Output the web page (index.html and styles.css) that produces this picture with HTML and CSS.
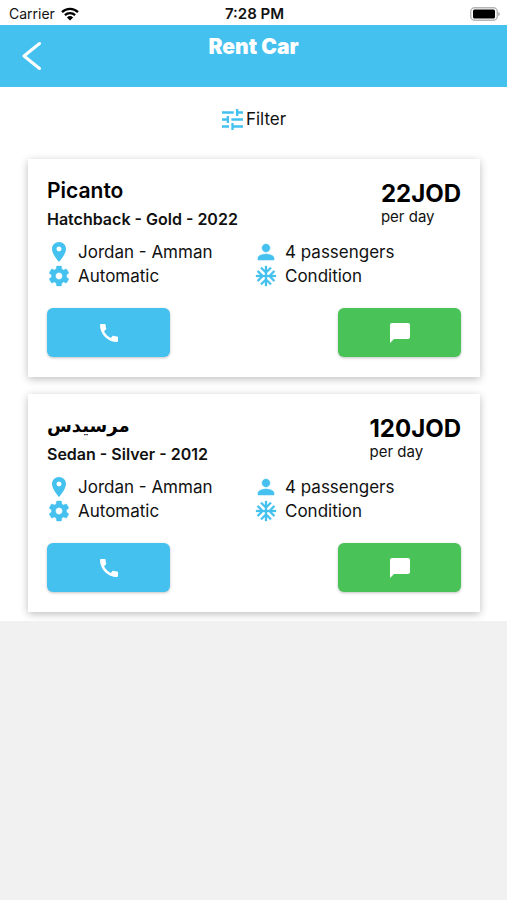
FILE: index.html
```html
<!DOCTYPE html>
<html lang="en">
<head>
<meta charset="utf-8">
<meta name="viewport" content="width=device-width, initial-scale=1">
<title>Rent Car</title>
<link rel="stylesheet" href="styles.css">
</head>
<body>
<svg class="sprite" aria-hidden="true">
  <symbol id="pin" viewBox="0 0 24 24"><path d="M12 2C8.13 2 5 5.13 5 9c0 5.25 7 13 7 13s7-7.75 7-13c0-3.87-3.13-7-7-7zm0 9.500a2.500 2.500 0 0 1 0-5 2.500 2.500 0 0 1 0 5z"/></symbol>
  <symbol id="gear" viewBox="0 0 24 24"><path d="M19.430 12.980c.04-.32.07-.64.07-.98s-.03-.66-.07-.98l2.110-1.650c.19-.15.24-.42.12-.64l-2-3.460c-.12-.22-.39-.3-.61-.22l-2.490 1c-.52-.4-1.080-.73-1.690-.98l-.38-2.650C14.460 2.180 14.250 2 14 2h-4c-.25 0-.46.18-.49.42l-.38 2.650c-.61.25-1.170.59-1.690.98l-2.490-1c-.23-.09-.49 0-.61.22l-2 3.460c-.13.22-.07.49.12.64l2.110 1.650c-.04.32-.07.65-.07.98s.03.66.07.98l-2.110 1.650c-.19.15-.24.42-.12.64l2 3.460c.12.22.39.3.61.22l2.490-1c.52.4 1.080.73 1.690.98l.38 2.650c.03.24.24.42.49.42h4c.25 0 .46-.18.49-.42l.38-2.650c.61-.25 1.170-.59 1.690-.98l2.490 1c.23.09.49 0 .61-.22l2-3.460c.12-.22.07-.49-.12-.64l-2.110-1.650zM12 15.500c-1.930 0-3.500-1.570-3.500-3.500s1.570-3.500 3.500-3.500 3.500 1.570 3.500 3.500-1.570 3.500-3.500 3.500z" stroke="#44c1ef" stroke-width=".4"/></symbol>
  <symbol id="person" viewBox="0 0 24 24"><path d="M12 12c2.210 0 4-1.790 4-4s-1.790-4-4-4-4 1.790-4 4 1.790 4 4 4zm0 2c-2.670 0-8 1.340-8 4v2h16v-2c0-2.660-5.330-4-8-4z" stroke="#44c1ef" stroke-width=".5"/></symbol>
  <symbol id="snow" viewBox="0 0 24 24"><path d="M22 11h-4.170l3.240-3.240-1.410-1.420L15 11h-2V9l4.660-4.660-1.420-1.410L13 6.170V2h-2v4.170L7.760 2.930 6.340 4.340 11 9v2H9L4.340 6.340 2.930 7.760 6.170 11H2v2h4.170l-3.240 3.240 1.410 1.420L9 13h2v2l-4.660 4.660 1.420 1.410L11 17.830V22h2v-4.170l3.240 3.240 1.420-1.410L13 15v-2h2l4.660 4.660 1.410-1.420L17.830 13H22z" stroke="#44c1ef" stroke-width=".3"/></symbol>
  <symbol id="phone" viewBox="0 0 24 24"><path d="M20.010 15.380c-1.230 0-2.420-.2-3.530-.56-.35-.12-.74-.03-1.010.24l-1.570 1.970c-2.830-1.350-5.480-3.900-6.890-6.830l1.950-1.660c.27-.28.35-.67.24-1.020-.37-1.110-.56-2.300-.56-3.530 0-.54-.45-.99-.99-.99H4.190C3.650 3 3 3.240 3 3.990 3 13.280 10.730 21 20.010 21c.71 0 .99-.63.99-1.180v-3.450c0-.54-.45-.99-.99-.99z"/></symbol>
  <symbol id="chat" viewBox="0 0 24 24"><path d="M20 2H4c-1.100 0-2 .9-2 2v18l4-4h14c1.100 0 2-.9 2-2V4c0-1.100-.9-2-2-2z"/></symbol>
</svg>

<div class="screen">
  <div class="status">
    <div class="carrier">Carrier
      <svg class="wifi" viewBox="0 0 18 14" aria-hidden="true"><path d="M1 5.200a11.500 11.500 0 0 1 16 0M3.900 8.100a7.400 7.400 0 0 1 10.200 0" fill="none" stroke="#000" stroke-width="2.300"/><path d="M9 13.600 5.900 10.400a4.500 4.500 0 0 1 6.200 0z"/></svg>
    </div>
    <div class="clock">7:28 PM</div>
    <svg class="battery" viewBox="0 0 30 14" aria-hidden="true"><rect x=".7" y=".7" width="26.600" height="12.600" rx="4" fill="#fff" stroke="#b5b5b5" stroke-width="1.400"/><rect x="3" y="2.500" width="22" height="9" rx="1.500"/><path d="M28.300 5v4q1.500-.7 1.500-2t-1.500-2z" fill="#a5a5a5"/></svg>
  </div>

  <header class="header">
    <button class="back" type="button" aria-label="Back"><svg viewBox="0 0 20 28" aria-hidden="true"><path d="M17.500 1.500 2 14l15.500 12.500" fill="none" stroke="#fff" stroke-width="3" stroke-linecap="round" stroke-linejoin="round"/></svg></button>
    <h1>Rent Car</h1>
  </header>

  <main>
    <button class="filter" type="button"><svg viewBox="3 3 18 18" aria-hidden="true"><path d="M3 17v2h6v-2H3zM3 5v2h10V5H3zm10 16v-2h8v-2h-8v-2h-2v6h2zM7 9v2H3v2h4v2h2V9H7zm14 4v-2H11v2h10zm-6-4h2V7h4V5h-4V3h-2v6z"/></svg>Filter</button>

    <article class="card">
      <div class="top">
        <div><h2>Picanto</h2><p class="model">Hatchback - Gold - 2022</p></div>
        <div><p class="price">22JOD</p><p class="unit">per day</p></div>
      </div>
      <ul class="features">
        <li><svg><use href="#pin"/></svg>Jordan - Amman</li>
        <li><svg><use href="#person"/></svg>4 passengers</li>
        <li><svg><use href="#gear"/></svg>Automatic</li>
        <li><svg><use href="#snow"/></svg>Condition</li>
      </ul>
      <div class="actions">
        <button class="call" type="button" aria-label="Call"><svg><use href="#phone"/></svg></button>
        <button class="message" type="button" aria-label="Message"><svg><use href="#chat"/></svg></button>
      </div>
    </article>

    <article class="card">
      <div class="top">
        <div><h2 lang="ar">مرسيدس</h2><p class="model">Sedan - Silver - 2012</p></div>
        <div><p class="price">120JOD</p><p class="unit">per day</p></div>
      </div>
      <ul class="features">
        <li><svg><use href="#pin"/></svg>Jordan - Amman</li>
        <li><svg><use href="#person"/></svg>4 passengers</li>
        <li><svg><use href="#gear"/></svg>Automatic</li>
        <li><svg><use href="#snow"/></svg>Condition</li>
      </ul>
      <div class="actions">
        <button class="call" type="button" aria-label="Call"><svg><use href="#phone"/></svg></button>
        <button class="message" type="button" aria-label="Message"><svg><use href="#chat"/></svg></button>
      </div>
    </article>
  </main>
</div>
</body>
</html>
```
FILE: styles.css
```css
* {
  box-sizing: border-box;
}

body {
  margin: 0;
  background: #f1f1f1;
  color: #111;
  font-family: Inter, "DejaVu Sans", sans-serif;
}

h1, h2, p, ul {
  margin: 0;
  padding: 0;
}

button {
  border: 0;
  padding: 0;
  background: none;
  color: inherit;
  font: inherit;
  cursor: pointer;
}

.sprite {
  display: none;
}

.screen {
  background: #fff;
}

.status {
  display: grid;
  grid-template-columns: 1fr auto 1fr;
  align-items: center;
  height: 25px;
  padding: 2px 7px 0 9px;
  font-size: 14px;
}

.carrier {
  display: flex;
  align-items: center;
  gap: 6px;
}

.wifi {
  width: 18px;
  height: 14px;
}

.clock {
  font-size: 15px;
  font-weight: 600;
}

.battery {
  justify-self: end;
  width: 30px;
  height: 14px;
}

.header {
  display: grid;
  grid-template-columns: 1fr auto 1fr;
  height: 62px;
  padding: 0 22px;
  background: #44c1ef;
  color: #fff;
}

.back {
  justify-self: start;
  align-self: center;
  height: 28px;
}

.back svg {
  display: block;
  width: 20px;
  height: 28px;
}

h1 {
  padding-top: 10px;
  font-size: 21px;
  line-height: 24px;
  font-weight: 900;
}

main {
  display: flex;
  flex-direction: column;
  gap: 17px;
  padding: 20px 27px 9px 28px;
}

.filter {
  display: flex;
  align-items: center;
  align-self: center;
  gap: 3px;
  height: 24px;
  margin-bottom: 11px;
  font-size: 17px;
}

.filter svg {
  width: 21px;
  height: 21px;
  fill: #44c1ef;
}

.card {
  padding: 20px 19px;
  background: #fff;
  box-shadow: 0 2px 8px rgba(0, 0, 0, 0.26);
}

.top {
  display: flex;
  justify-content: space-between;
  height: 51px;
}

h2 {
  color: #000;
  font-size: 21px;
  line-height: 24px;
  font-weight: 600;
}

h2:lang(ar) {
  font-size: 18px;
}

.model {
  margin-top: 6px;
  font-size: 16px;
  line-height: 20px;
  font-weight: 600;
}

.price {
  color: #000;
  font-size: 24px;
  line-height: 30px;
  font-weight: 700;
}

.unit {
  font-size: 15px;
  line-height: 16px;
}

.features {
  display: grid;
  grid-template-columns: 1fr 1fr;
  margin-top: 10px;
  list-style: none;
  font-size: 17px;
  line-height: 24px;
}

.features li {
  display: flex;
  align-items: center;
  gap: 7px;
}

.features svg {
  width: 24px;
  height: 24px;
  fill: #44c1ef;
}

.actions {
  display: flex;
  justify-content: space-between;
  margin-top: 20px;
}

.actions button {
  display: flex;
  align-items: center;
  justify-content: center;
  width: 123px;
  height: 49px;
  border-radius: 6px;
  box-shadow: 0 1px 3px rgba(0, 0, 0, 0.24);
}

.actions .call {
  background: #44c1ef;
}

.actions .message {
  background: #49c257;
}

.actions svg {
  width: 24px;
  height: 24px;
  fill: #fff;
}
```
